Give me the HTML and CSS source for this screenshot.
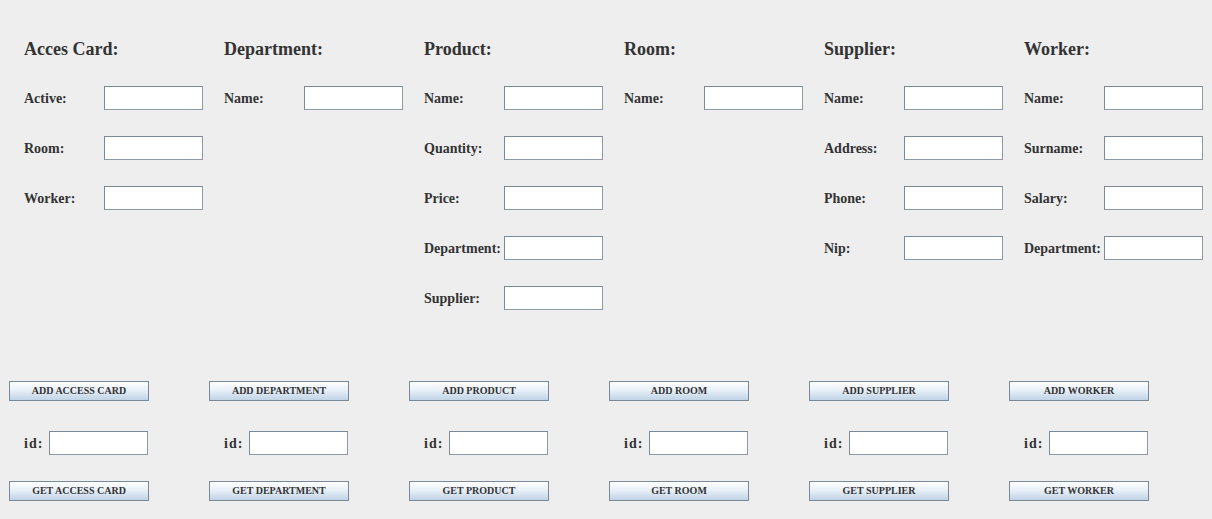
FILE: index.html
```html
<!DOCTYPE html>
<html>
<head>
<meta charset="utf-8">
<link rel="stylesheet" href="styles.css">
</head>
<body>
<div class="page">
  <div class="forms">
    <div class="col">
      <div class="heading">Acces Card:</div>
      <div class="row"><span class="label">Active:</span><span class="field"></span></div>
      <div class="row"><span class="label">Room:</span><span class="field"></span></div>
      <div class="row"><span class="label">Worker:</span><span class="field"></span></div>
    </div>
    <div class="col">
      <div class="heading">Department:</div>
      <div class="row"><span class="label">Name:</span><span class="field"></span></div>
    </div>
    <div class="col">
      <div class="heading">Product:</div>
      <div class="row"><span class="label">Name:</span><span class="field"></span></div>
      <div class="row"><span class="label">Quantity:</span><span class="field"></span></div>
      <div class="row"><span class="label">Price:</span><span class="field"></span></div>
      <div class="row"><span class="label">Department:</span><span class="field"></span></div>
      <div class="row"><span class="label">Supplier:</span><span class="field"></span></div>
    </div>
    <div class="col">
      <div class="heading">Room:</div>
      <div class="row"><span class="label">Name:</span><span class="field"></span></div>
    </div>
    <div class="col">
      <div class="heading">Supplier:</div>
      <div class="row"><span class="label">Name:</span><span class="field"></span></div>
      <div class="row"><span class="label">Address:</span><span class="field"></span></div>
      <div class="row"><span class="label">Phone:</span><span class="field"></span></div>
      <div class="row"><span class="label">Nip:</span><span class="field"></span></div>
    </div>
    <div class="col">
      <div class="heading">Worker:</div>
      <div class="row"><span class="label">Name:</span><span class="field"></span></div>
      <div class="row"><span class="label">Surname:</span><span class="field"></span></div>
      <div class="row"><span class="label">Salary:</span><span class="field"></span></div>
      <div class="row"><span class="label">Department:</span><span class="field"></span></div>
    </div>
  </div>
  <div class="actions">
    <div class="acol">
      <div class="btn">ADD ACCESS CARD</div>
      <div class="idrow"><span class="idlabel">id:</span><span class="field"></span></div>
      <div class="btn">GET ACCESS CARD</div>
    </div>
    <div class="acol">
      <div class="btn">ADD DEPARTMENT</div>
      <div class="idrow"><span class="idlabel">id:</span><span class="field"></span></div>
      <div class="btn">GET DEPARTMENT</div>
    </div>
    <div class="acol">
      <div class="btn">ADD PRODUCT</div>
      <div class="idrow"><span class="idlabel">id:</span><span class="field"></span></div>
      <div class="btn">GET PRODUCT</div>
    </div>
    <div class="acol">
      <div class="btn">ADD ROOM</div>
      <div class="idrow"><span class="idlabel">id:</span><span class="field"></span></div>
      <div class="btn">GET ROOM</div>
    </div>
    <div class="acol">
      <div class="btn">ADD SUPPLIER</div>
      <div class="idrow"><span class="idlabel">id:</span><span class="field"></span></div>
      <div class="btn">GET SUPPLIER</div>
    </div>
    <div class="acol">
      <div class="btn">ADD WORKER</div>
      <div class="idrow"><span class="idlabel">id:</span><span class="field"></span></div>
      <div class="btn">GET WORKER</div>
    </div>
  </div>
</div>
</body>
</html>
```
FILE: styles.css
```css
html, body {
  margin: 0;
  padding: 0;
  background: #eeeeee;
}
body {
  width: 1212px;
  height: 519px;
  overflow: hidden;
  font-family: "Liberation Serif", "Times New Roman", serif;
  color: #333333;
}
.page {
  display: flex;
  flex-direction: column;
}
.forms {
  box-sizing: border-box;
  height: 381px;
  padding: 36px 0 0 24px;
  display: grid;
  grid-template-columns: repeat(6, 200px);
  align-items: start;
}
.col {
  display: flex;
  flex-direction: column;
  gap: 26px;
}
.heading {
  height: 24px;
  line-height: 26px;
  font-size: 18px;
  font-weight: bold;
}
.row {
  display: flex;
  align-items: center;
  height: 24px;
}
.label {
  width: 80px;
  padding-top: 2px;
  font-size: 14px;
  font-weight: bold;
  white-space: nowrap;
}
.field {
  box-sizing: border-box;
  width: 99px;
  height: 24px;
  background: #ffffff;
  border: 1px solid #7a8a99;
  border-right-color: #8d9aa8;
  border-bottom-color: #8d9aa8;
}
.actions {
  padding-left: 9px;
  display: grid;
  grid-template-columns: repeat(6, 200px);
}
.acol {
  display: flex;
  flex-direction: column;
}
.btn {
  box-sizing: border-box;
  width: 140px;
  height: 20px;
  border: 1px solid #7a8a99;
  background: linear-gradient(to bottom, #ffffff 0%, #e8f0f8 45%, #c0d3e6 100%);
  font-size: 10px;
  font-weight: bold;
  text-align: center;
  line-height: 18px;
  color: #333333;
}
.idrow {
  display: flex;
  align-items: center;
  height: 24px;
  margin: 30px 0 26px 15px;
}
.idlabel {
  width: 25px;
  padding-top: 2px;
  font-size: 14px;
  font-weight: bold;
  letter-spacing: 1px;
}
```
